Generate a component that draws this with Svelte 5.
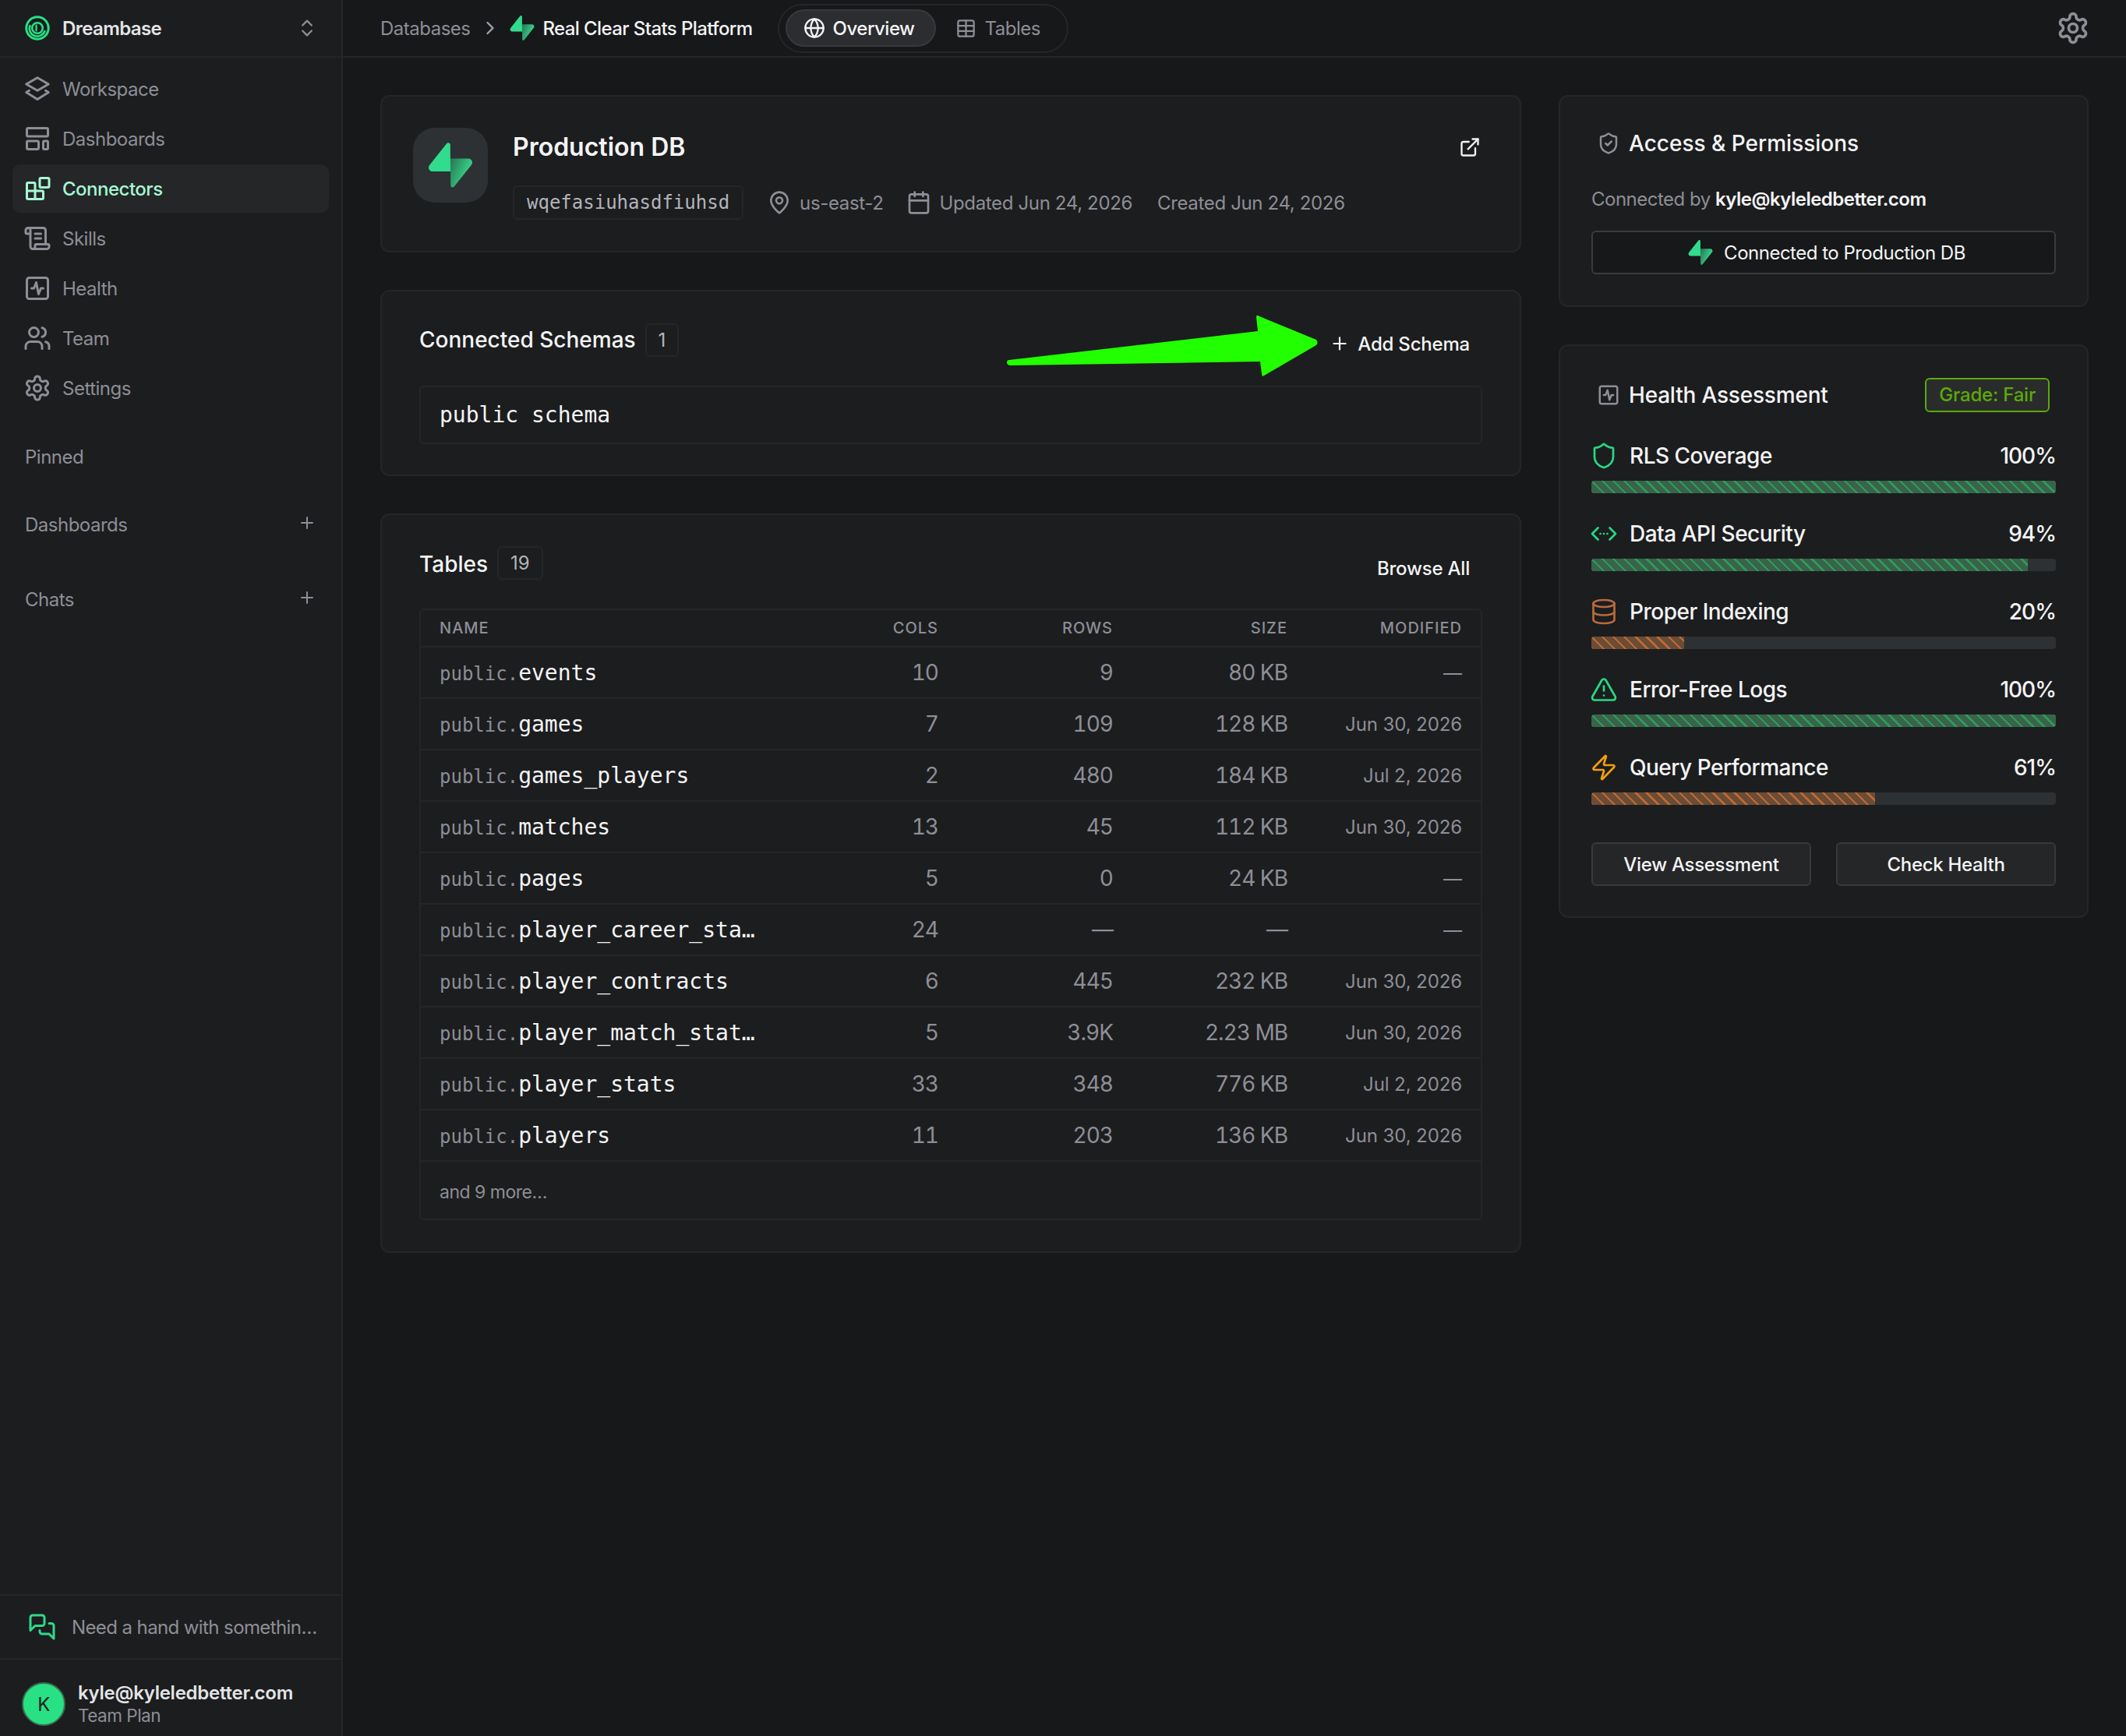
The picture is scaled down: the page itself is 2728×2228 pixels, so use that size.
<script>
  const dot = (x, y, r) => `M${x - r} ${y}a${r} ${r} 0 1 0 ${2 * r} 0a${r} ${r} 0 1 0 ${-2 * r} 0z`;
  const box = "M5 3h14a2 2 0 0 1 2 2v14a2 2 0 0 1-2 2H5a2 2 0 0 1-2-2V5a2 2 0 0 1 2-2z";

  const icons = {
    workspace: ["M12 2.5 21.5 8 12 13.5 2.5 8z", "M5 13.5 2.5 15 12 21 21.5 15 19 13.5"],
    dashboards: ["M4 3h16a1 1 0 0 1 1 1v5a1 1 0 0 1-1 1H4a1 1 0 0 1-1-1V4a1 1 0 0 1 1-1z", "M4 14h8a1 1 0 0 1 1 1v5a1 1 0 0 1-1 1H4a1 1 0 0 1-1-1v-5a1 1 0 0 1 1-1z", "M18 14h2a1 1 0 0 1 1 1v5a1 1 0 0 1-1 1h-2a1 1 0 0 1-1-1v-5a1 1 0 0 1 1-1z"],
    connectors: ["M15 3h6a1 1 0 0 1 1 1v6a1 1 0 0 1-1 1h-6a1 1 0 0 1-1-1V4a1 1 0 0 1 1-1z", "M10 21V8a1 1 0 0 0-1-1H4a1 1 0 0 0-1 1v12a1 1 0 0 0 1 1h12a1 1 0 0 0 1-1v-5a1 1 0 0 0-1-1H3"],
    skills: ["M15 12h-5", "M15 8h-5", "M19 17V5a2 2 0 0 0-2-2H4", "M8 21h12a2 2 0 0 0 2-2v-1a1 1 0 0 0-1-1H11a1 1 0 0 0-1 1v1a2 2 0 1 1-4 0V5a2 2 0 1 0-4 0v2a1 1 0 0 0 1 1h3"],
    health: [box, "M17 12h-2l-2 5-2-10-2 5H7"],
    team: ["M16 21v-2a4 4 0 0 0-4-4H6a4 4 0 0 0-4 4v2", dot(9, 7, 4), "M22 21v-2a4 4 0 0 0-3-3.87", "M16 3.13a4 4 0 0 1 0 7.75"],
    settings: ["M12.22 2h-.44a2 2 0 0 0-2 2v.18a2 2 0 0 1-1 1.73l-.43.25a2 2 0 0 1-2 0l-.15-.08a2 2 0 0 0-2.73.73l-.22.38a2 2 0 0 0 .73 2.73l.15.1a2 2 0 0 1 1 1.72v.51a2 2 0 0 1-1 1.74l-.15.09a2 2 0 0 0-.73 2.73l.22.38a2 2 0 0 0 2.73.73l.15-.08a2 2 0 0 1 2 0l.43.25a2 2 0 0 1 1 1.73V20a2 2 0 0 0 2 2h.44a2 2 0 0 0 2-2v-.18a2 2 0 0 1 1-1.73l.43-.25a2 2 0 0 1 2 0l.15.08a2 2 0 0 0 2.73-.73l.22-.39a2 2 0 0 0-.73-2.73l-.15-.08a2 2 0 0 1-1-1.74v-.5a2 2 0 0 1 1-1.74l.15-.09a2 2 0 0 0 .73-2.73l-.22-.38a2 2 0 0 0-2.73-.73l-.15.08a2 2 0 0 1-2 0l-.43-.25a2 2 0 0 1-1-1.73V4a2 2 0 0 0-2-2z", dot(12, 12, 3)],
    updown: ["m7 15 5 5 5-5", "m7 9 5-5 5 5"],
    plus: ["M5 12h14", "M12 5v14"],
    chevron: ["m9 18 6-6-6-6"],
    globe: [dot(12, 12, 10), "M12 2a14.5 14.5 0 0 0 0 20 14.5 14.5 0 0 0 0-20", "M2 12h20"],
    table: [box, "M3 9h18", "M3 15h18", "M12 3v18"],
    pin: ["M20 10c0 6-8 12-8 12s-8-6-8-12a8 8 0 0 1 16 0z", dot(12, 10, 3)],
    calendar: ["M5 4h14a2 2 0 0 1 2 2v14a2 2 0 0 1-2 2H5a2 2 0 0 1-2-2V6a2 2 0 0 1 2-2z", "M16 2v4", "M8 2v4", "M3 10h18"],
    external: ["M15 3h6v6", "M10 14 21 3", "M18 13v6a2 2 0 0 1-2 2H5a2 2 0 0 1-2-2V8a2 2 0 0 1 2-2h6"],
    shieldcheck: ["M20 13c0 5-3.5 7.5-7.66 8.95a1 1 0 0 1-.67-.01C7.5 20.5 4 18 4 13V6a1 1 0 0 1 1-1c2 0 4.5-1.2 6.24-2.72a1.17 1.17 0 0 1 1.52 0C14.51 3.81 17 5 19 5a1 1 0 0 1 1 1z", "m9 12 2 2 4-4"],
    shield: ["M20 13c0 5-3.5 7.5-7.66 8.95a1 1 0 0 1-.67-.01C7.5 20.5 4 18 4 13V6a1 1 0 0 1 1-1c2 0 4.5-1.2 6.24-2.72a1.17 1.17 0 0 1 1.52 0C14.51 3.81 17 5 19 5a1 1 0 0 1 1 1z"],
    api: ["m7 7-5 5 5 5", "m17 7 5 5-5 5", "M9 12h.01", "M12 12h.01", "M15 12h.01"],
    database: ["M3 5a9 3 0 1 0 18 0a9 3 0 1 0-18 0z", "M3 5v14a9 3 0 0 0 18 0V5", "M3 12a9 3 0 0 0 18 0"],
    alert: ["m21.73 18-8-14a2 2 0 0 0-3.48 0l-8 14A2 2 0 0 0 4 21h16a2 2 0 0 0 1.73-3", "M12 9v4", "M12 17h.01"],
    zap: ["M4 14a1 1 0 0 1-.78-1.63l9.9-10.2a.5.5 0 0 1 .86.46l-1.92 6.02A1 1 0 0 0 13 10h7a1 1 0 0 1 .78 1.63l-9.9 10.2a.5.5 0 0 1-.86-.46l1.92-6.02A1 1 0 0 0 11 14z"],
    chat: ["M14 9a2 2 0 0 1-2 2H6l-4 4V4a2 2 0 0 1 2-2h8a2 2 0 0 1 2 2z", "M18 9h2a2 2 0 0 1 2 2v11l-4-4h-6a2 2 0 0 1-2-2v-1"]
  };

  const nav = [
    { label: "Workspace", icon: "workspace" },
    { label: "Dashboards", icon: "dashboards" },
    { label: "Connectors", icon: "connectors", active: true },
    { label: "Skills", icon: "skills" },
    { label: "Health", icon: "health" },
    { label: "Team", icon: "team" },
    { label: "Settings", icon: "settings" }
  ];

  const tables = [
    ["events", "10", "9", "80 KB", "—"],
    ["games", "7", "109", "128 KB", "Jun 30, 2026"],
    ["games_players", "2", "480", "184 KB", "Jul 2, 2026"],
    ["matches", "13", "45", "112 KB", "Jun 30, 2026"],
    ["pages", "5", "0", "24 KB", "—"],
    ["player_career_sta…", "24", "—", "—", "—"],
    ["player_contracts", "6", "445", "232 KB", "Jun 30, 2026"],
    ["player_match_stat…", "5", "3.9K", "2.23 MB", "Jun 30, 2026"],
    ["player_stats", "33", "348", "776 KB", "Jul 2, 2026"],
    ["players", "11", "203", "136 KB", "Jun 30, 2026"]
  ];

  const checks = [
    { label: "RLS Coverage", value: 100, icon: "shield", tone: "green" },
    { label: "Data API Security", value: 94, icon: "api", tone: "green" },
    { label: "Proper Indexing", value: 20, icon: "database", tone: "orange" },
    { label: "Error-Free Logs", value: 100, icon: "alert", tone: "green" },
    { label: "Query Performance", value: 61, icon: "zap", tone: "amber" }
  ];
</script>

{#snippet icon(name, size = 28)}
  <svg class="ic" width={size} height={size} viewBox="0 0 24 24" aria-hidden="true">
    {#each icons[name] as d}
      <path {d} />
    {/each}
  </svg>
{/snippet}

{#snippet bolt(size)}
  <svg class="bolt" width={size} height={size} viewBox="0 0 109 113" aria-hidden="true">
    <defs>
      <linearGradient id="boltfade" x1="54" y1="55" x2="95" y2="72" gradientUnits="userSpaceOnUse">
        <stop offset="0" stop-color="#2a7d58" />
        <stop offset="1" stop-color="#35c983" />
      </linearGradient>
    </defs>
    <path fill="url(#boltfade)" d="M63.7 110.3c-2.9 3.6-8.7 1.6-8.7-3L54 40.1h45.2c8.2 0 12.8 9.5 7.7 15.9L63.7 110.3z" />
    <path fill="#31dc8c" d="M45.3 2.1c2.9-3.6 8.7-1.6 8.7 3l.5 67.2H9.8c-8.2 0-12.8-9.5-7.7-15.9L45.3 2.1z" />
  </svg>
{/snippet}

<div class="app">
  <aside class="sidebar">
    <div class="brand">
      <svg class="logo" width="32" height="32" viewBox="0 0 32 32" aria-hidden="true">
        <circle class="ring" cx="16" cy="16" r="14.2" />
        <path d="M6.4 13A10 10 0 0 0 25.4 20" />
        <circle cx="16" cy="16" r="6.8" />
        <path class="stem" d="M14.6 12.6V19.4" />
      </svg>
      <span class="brand-name">Dreambase</span>
      <span class="updown">{@render icon("updown", 28)}</span>
    </div>

    <nav class="nav">
      {#each nav as item}
        <div class="nav-item" class:active={item.active}>
          {@render icon(item.icon, 36)}
          <span>{item.label}</span>
        </div>
      {/each}
    </nav>

    <div class="side-group pinned">Pinned</div>
    <div class="side-group dash"><span>Dashboards</span><span class="add">{@render icon("plus", 24)}</span></div>
    <div class="side-group chats"><span>Chats</span><span class="add">{@render icon("plus", 24)}</span></div>

    <div class="help">
      {@render icon("chat", 36)}
      <span class="help-text">Need a hand with somethin…</span>
    </div>
    <div class="user">
      <div class="avatar">K</div>
      <div>
        <div class="user-mail">kyle@kyleledbetter.com</div>
        <div class="user-plan">Team Plan</div>
      </div>
    </div>
  </aside>

  <div class="main">
    <header class="topbar">
      <span class="crumb">Databases</span>
      <span class="crumb-sep">{@render icon("chevron", 28)}</span>
      {@render bolt(32)}
      <span class="crumb-current">Real Clear Stats Platform</span>
      <div class="tabs">
        <div class="tab on">{@render icon("globe", 28)}<span>Overview</span></div>
        <div class="tab">{@render icon("table", 27)}<span>Tables</span></div>
      </div>
      <span class="top-gear">{@render icon("settings", 44)}</span>
    </header>

    <div class="content">
      <div class="col">
        <section class="card db-card">
          <div class="db-icon">{@render bolt(58)}</div>
          <div class="db-body">
            <h1>Production DB</h1>
            <div class="db-meta">
              <code class="ref">wqefasiuhasdfiuhsd</code>
              <span class="meta region">{@render icon("pin", 32)}us-east-2</span>
              <span class="meta updated">{@render icon("calendar", 32)}Updated Jun 24, 2026</span>
              <span class="meta">Created Jun 24, 2026</span>
            </div>
          </div>
          <span class="db-link">{@render icon("external", 28)}</span>
        </section>

        <section class="card wide schemas-card">
          <div class="sec-head">
            <h2>Connected Schemas</h2>
            <span class="count">1</span>
            <button class="ghost">{@render icon("plus", 26)}Add Schema</button>
          </div>
          <div class="schema">public schema</div>
        </section>

        <section class="card wide tables-card">
          <div class="sec-head">
            <h2>Tables</h2>
            <span class="count">19</span>
            <button class="ghost">Browse All</button>
          </div>
          <div class="grid-table">
            <div class="tr th">
              <span>NAME</span><span>COLS</span><span>ROWS</span><span>SIZE</span><span>MODIFIED</span>
            </div>
            {#each tables as row}
              <div class="tr">
                <span class="name"><span class="ns">public.</span><span class="tname">{row[0]}</span></span>
                <span class="num big">{row[1]}</span>
                <span class="num big">{row[2]}</span>
                <span class="num big">{row[3]}</span>
                <span class="num">{row[4]}</span>
              </div>
            {/each}
            <div class="more">and 9 more…</div>
          </div>
        </section>
      </div>

      <div class="col">
        <section class="card side">
          <div class="side-title">{@render icon("shieldcheck", 30)}<h2>Access &amp; Permissions</h2></div>
          <p class="by">Connected by <strong>kyle@kyleledbetter.com</strong></p>
          <div class="linked">{@render bolt(32)}<span>Connected to Production DB</span></div>
        </section>

        <section class="card side health-card">
          <div class="side-title health-head">
            {@render icon("health", 30)}
            <h2>Health Assessment</h2>
            <span class="grade">Grade: Fair</span>
          </div>
          {#each checks as check}
            <div class="check">
              <div class="check-row">
                <span class="check-icon {check.tone}">{@render icon(check.icon, 36)}</span>
                <span class="check-label">{check.label}</span>
                <span class="check-value">{check.value}%</span>
              </div>
              <div class="track">
                <div class="fill" class:warm={check.tone !== "green"} style="width: {check.value}%"></div>
              </div>
            </div>
          {/each}
          <div class="actions">
            <button class="solid">View Assessment</button>
            <button class="solid">Check Health</button>
          </div>
        </section>
      </div>
    </div>

    <!-- annotation drawn over the screenshot -->
    <svg class="arrow" width="420" height="100" viewBox="1290 395 420 100" aria-hidden="true">
      <path d="M1295 462 1614 425 1612 407 Q1612 403 1616 406 L1689 436 Q1692 440 1689 443 L1622 482 Q1619 484 1619 480 L1617 464 1297 469 Q1292 469 1292 465 Q1292 462 1295 462z" />
    </svg>
  </div>
</div>

<style>
  :global(body) {
    margin: 0;
    background: #17181a;
  }

  .app {
    display: grid;
    grid-template-columns: 440px 1fr;
    height: 2228px;
    overflow: hidden;
    font-family: Inter, "Liberation Sans", sans-serif;
    font-size: 24px;
    letter-spacing: -0.5px;
    color: #f4f4f5;
  }

  .ic {
    flex: none;
    fill: none;
    stroke: currentColor;
    stroke-width: 2;
    stroke-linecap: round;
    stroke-linejoin: round;
  }

  .bolt {
    flex: none;
  }

  h1, h2, p {
    margin: 0;
  }

  button {
    font: inherit;
    letter-spacing: -0.3px;
    cursor: pointer;
  }

  /* sidebar */
  .sidebar {
    display: flex;
    flex-direction: column;
    background: #1c1d1f;
    border-right: 2px solid #252628;
    color: #8e8e96;
  }

  .brand {
    display: flex;
    align-items: center;
    gap: 16px;
    height: 72px;
    padding: 0 32px;
    border-bottom: 2px solid #252628;
  }

  .logo {
    fill: none;
    stroke: #27e184;
    stroke-width: 2.6;
    stroke-linecap: round;
  }

  .logo .ring {
    stroke-width: 3;
  }

  .logo .stem {
    stroke-width: 2.2;
  }

  .brand-name {
    flex: 1;
    font-weight: 600;
    letter-spacing: -0.6px;
    color: #e4e4e7;
  }

  .updown {
    display: flex;
    margin-right: -2px;
  }

  .nav {
    display: flex;
    flex-direction: column;
    gap: 2px;
    padding: 9px 16px 0;
  }

  .nav-item {
    display: flex;
    align-items: center;
    gap: 14px;
    height: 62px;
    padding: 0 14px;
    border-radius: 10px;
  }

  .nav-item.active {
    background: #252628;
    color: #a5f8d3;
    font-weight: 500;
  }

  .side-group {
    display: flex;
    align-items: center;
    justify-content: space-between;
    height: 60px;
    padding: 0 32px;
  }

  .add {
    display: flex;
    margin-top: -4px;
  }

  .pinned {
    margin-top: 27px;
  }

  .dash {
    margin-top: 27px;
  }

  .chats {
    margin-top: 36px;
  }

  .help {
    display: flex;
    align-items: center;
    gap: 20px;
    height: 80px;
    margin-top: auto;
    padding: 0 36px;
    border-top: 2px solid #252628;
    border-bottom: 2px solid #252628;
    color: #2fd98a;
  }

  .help-text {
    color: #8e8e96;
    letter-spacing: -0.6px;
    white-space: nowrap;
  }

  .user {
    display: flex;
    align-items: center;
    gap: 16px;
    height: 98px;
    box-sizing: border-box;
    padding: 16px 28px 0;
  }

  .avatar {
    display: grid;
    place-items: center;
    width: 52px;
    height: 52px;
    border: 2px solid #3a6b50;
    border-radius: 50%;
    background: #27e184;
    color: #1c1d1f;
  }

  .user-mail {
    font-weight: 600;
    letter-spacing: -0.25px;
    color: #e4e4e7;
    line-height: 30px;
  }

  .user-plan {
    font-size: 22.5px;
    line-height: 28px;
  }

  /* top bar */
  .main {
    position: relative;
    min-width: 0;
  }

  .topbar {
    display: flex;
    align-items: center;
    height: 72px;
    padding: 0 48px;
    border-bottom: 2px solid #252628;
  }

  .crumb {
    color: #8e8e96;
  }

  .crumb-sep {
    display: flex;
    margin: 0 11px 0 12px;
    color: #a1a1aa;
  }

  .crumb-current {
    margin: 0 32px 0 10px;
    font-weight: 500;
    letter-spacing: -0.6px;
  }

  .tabs {
    display: flex;
    align-items: center;
    gap: 25px;
    height: 63px;
    box-sizing: border-box;
    padding: 0 34px 0 8px;
    border: 2px solid #252628;
    border-radius: 32px;
  }

  .tab {
    display: flex;
    align-items: center;
    gap: 11px;
    color: #8e8e96;
  }

  .tab.on {
    gap: 10px;
    height: 48px;
    box-sizing: border-box;
    padding: 0 25px 0 21px;
    border: 2px solid #37393b;
    border-radius: 24px;
    background: #2b2d30;
    color: #f4f4f5;
    font-weight: 500;
  }

  .top-gear {
    display: flex;
    margin-left: auto;
    margin-right: -2px;
    color: #8e8e96;
  }

  /* content */
  .content {
    display: grid;
    grid-template-columns: 1fr 680px;
    gap: 48px;
    align-items: start;
    padding: 48px;
  }

  .col {
    display: flex;
    flex-direction: column;
    gap: 48px;
    min-width: 0;
  }

  .card {
    border: 2px solid #252628;
    border-radius: 12px;
    background: #1c1d1f;
  }

  .db-card {
    display: flex;
    align-items: flex-start;
    gap: 32px;
    padding: 40px 50px 40px 40px;
  }

  .db-icon {
    display: grid;
    place-items: center;
    width: 96px;
    height: 96px;
    border-radius: 28px;
    background: #2d3133;
  }

  .db-body {
    flex: 1;
  }

  h1 {
    padding-top: 1px;
    font-size: 32px;
    font-weight: 600;
    line-height: 47px;
    letter-spacing: 0;
  }

  .db-meta {
    display: flex;
    align-items: center;
    margin-top: 26px;
  }

  .ref {
    padding: 0 16px;
    height: 44px;
    box-sizing: border-box;
    line-height: 40px;
    border: 2px solid #252628;
    border-radius: 6px;
    font-family: "DejaVu Sans Mono", monospace;
    font-size: 24px;
    letter-spacing: 0;
    color: #b4b4bb;
  }

  .meta {
    display: flex;
    align-items: center;
    gap: 10px;
    letter-spacing: -0.35px;
    color: #8e8e96;
  }

  .region {
    margin-left: 30px;
  }

  .updated {
    margin: 0 32px 0 30px;
  }

  .db-link {
    display: flex;
    margin-top: 11px;
  }

  .wide {
    padding: 39px 48px;
  }

  .schemas-card {
    padding-top: 41px;
  }

  .schemas-card .ghost {
    margin-top: -2px;
    margin-bottom: 2px;
  }

  .tables-card {
    padding-top: 40px;
    padding-bottom: 40px;
  }

  .tables-card h2 {
    padding-top: 2px;
  }

  .sec-head {
    display: flex;
    align-items: flex-start;
    gap: 12px;
    margin-bottom: 24px;
  }

  h2 {
    font-size: 28px;
    font-weight: 500;
    line-height: 43px;
    letter-spacing: 0;
  }

  .count {
    min-width: 40px;
    height: 43px;
    box-sizing: border-box;
    padding: 0 15px;
    line-height: 39px;
    text-align: center;
    border: 2px solid #252628;
    border-radius: 6px;
    letter-spacing: 0;
    color: #b4b4bb;
  }

  .ghost {
    display: flex;
    align-items: center;
    gap: 10px;
    height: 56px;
    margin-left: auto;
    padding: 0 16px;
    border: 0;
    background: none;
    color: #f4f4f5;
    font-size: 24px;
    font-weight: 500;
    letter-spacing: -0.2px;
  }

  .schema {
    height: 75px;
    box-sizing: border-box;
    padding: 0 24px;
    line-height: 71px;
    border: 2px solid #252628;
    border-radius: 6px;
    font-family: "DejaVu Sans Mono", monospace;
    font-size: 28px;
    letter-spacing: 0;
  }

  .grid-table {
    border: 2px solid #252628;
    border-radius: 6px;
  }

  .tr {
    display: grid;
    grid-template-columns: 1fr repeat(4, 224px);
    align-items: center;
    height: 66px;
    box-sizing: border-box;
    padding: 0 24px;
    border-bottom: 2px solid #252628;
    text-align: right;
  }

  .th {
    height: 48px;
    font-size: 20px;
    font-weight: 500;
    letter-spacing: 1px;
    color: #8e8e96;
  }

  .th span:first-child {
    text-align: left;
  }

  .name {
    display: flex;
    align-items: baseline;
    font-family: "DejaVu Sans Mono", monospace;
    letter-spacing: 0;
    text-align: left;
  }

  .ns {
    font-size: 24px;
    color: #8e8e96;
  }

  .tname {
    white-space: nowrap;
    font-size: 28px;
  }

  .num {
    font-size: 24px;
    letter-spacing: -0.1px;
    color: #8e8e96;
  }

  .num.big {
    font-size: 28px;
    letter-spacing: -1px;
    font-variant-numeric: tabular-nums;
  }

  .more {
    height: 73px;
    box-sizing: border-box;
    padding: 8px 24px 0;
    line-height: 63px;
    font-size: 23px;
    color: #8e8e96;
  }

  .side {
    padding: 40px;
  }

  .health-card {
    padding-top: 41px;
    padding-bottom: 39px;
  }

  .side-title {
    display: flex;
    align-items: center;
    gap: 11px;
    padding-left: 7px;
    color: #8e8e96;
  }

  .side-title h2 {
    color: #f4f4f5;
    line-height: 40px;
  }

  .health-head h2 {
    letter-spacing: -0.2px;
  }

  .by {
    margin-top: 32px;
    line-height: 40px;
    color: #8e8e96;
  }

  .by strong {
    font-weight: 600;
    color: #f4f4f5;
  }

  .linked {
    display: flex;
    align-items: center;
    justify-content: center;
    gap: 14px;
    height: 56px;
    box-sizing: border-box;
    margin-top: 20px;
    padding-left: 8px;
    border: 2px solid #3a3b3d;
    border-radius: 6px;
    background: #17181a;
  }

  .health-head {
    height: 44px;
    padding-right: 8px;
  }

  .grade {
    display: block;
    height: 44px;
    box-sizing: border-box;
    margin-left: auto;
    padding: 0 16px;
    line-height: 40px;
    border: 2px solid #5ba90a;
    border-radius: 6px;
    background: #2a2c2b;
    font-weight: 500;
    letter-spacing: -0.2px;
    color: #5ba90a;
  }

  .check {
    margin-top: 32px;
  }

  .health-head + .check {
    margin-top: 36px;
  }

  .check-row {
    display: flex;
    align-items: center;
    height: 40px;
    margin-bottom: 12px;
    font-size: 28px;
    font-weight: 500;
    letter-spacing: -0.5px;
  }

  .check-icon {
    display: flex;
    width: 48px;
    margin-left: -2px;
    margin-right: 3px;
    --icon-stroke: 1.8;
  }

  .check-icon .ic {
    stroke-width: 1.8;
  }

  .green {
    color: #27d985;
  }

  .orange {
    color: #b86a3a;
  }

  .amber {
    color: #f0a010;
  }

  .check-value {
    margin-left: auto;
    letter-spacing: -1px;
  }

  .track {
    height: 16px;
    overflow: hidden;
    border-radius: 4px;
    background: #2d3133;
  }

  .fill {
    height: 100%;
    background: repeating-linear-gradient(45deg, #2e9a58 0 2.4px, #39634a 2.4px 10px);
  }

  .fill.warm {
    background: repeating-linear-gradient(45deg, #bb6a32 0 2.4px, #6b4c36 2.4px 10px);
  }

  .actions {
    display: grid;
    grid-template-columns: 1fr 1fr;
    gap: 32px;
    margin-top: 48px;
  }

  .solid {
    height: 56px;
    border: 2px solid #37393b;
    border-radius: 6px;
    background: #252628;
    color: #f4f4f5;
    font-size: 24px;
    font-weight: 500;
  }

  .arrow {
    position: absolute;
    left: 850px;
    top: 395px;
    fill: #22ff00;
  }
</style>
